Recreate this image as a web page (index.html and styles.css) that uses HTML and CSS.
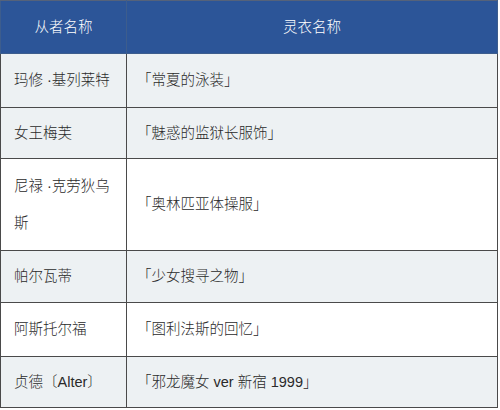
FILE: index.html
```html
<!DOCTYPE html>
<html lang="zh">
<head>
<meta charset="utf-8">
<link rel="stylesheet" href="styles.css">
</head>
<body>
<table class="costumes">
  <thead>
    <tr class="r-head">
      <th class="col-a">从者名称</th>
      <th class="col-b">灵衣名称</th>
    </tr>
  </thead>
  <tbody>
    <tr class="r1 gray"><td>玛修 ·基列莱特</td><td>「常夏的泳装」</td></tr>
    <tr class="r2 gray"><td>女王梅芙</td><td>「魅惑的监狱长服饰」</td></tr>
    <tr class="r3 white"><td>尼禄 ·克劳狄乌<br>斯</td><td>「奥林匹亚体操服」</td></tr>
    <tr class="r4 gray"><td>帕尔瓦蒂</td><td>「少女搜寻之物」</td></tr>
    <tr class="r5 white"><td>阿斯托尔福</td><td>「图利法斯的回忆」</td></tr>
    <tr class="r6 gray"><td>贞德〔Alter〕</td><td>「邪龙魔女 ver 新宿 1999」</td></tr>
  </tbody>
</table>
</body>
</html>
```

FILE: styles.css
```css
html, body {
  margin: 0;
  padding: 0;
  background: #ffffff;
}
.costumes {
  border-collapse: collapse;
  width: 498px;
  table-layout: fixed;
  font-family: "Liberation Sans", "Noto Sans CJK SC", sans-serif;
  font-size: 14.5px;
  font-weight: 300;
  color: #2a2a2a;
}
.costumes th,
.costumes td {
  padding: 0 0 0 13px;
  border: 1px solid #4a4a4a;
  vertical-align: middle;
  line-height: 37px;
}
.costumes th {
  background: #2c5598;
  color: #ffffff;
  font-weight: 300;
  text-align: center;
  padding: 0;
  border-color: #3d5d8d;
  border-top-color: #55627a;
}
.costumes .col-a { width: 125px; }
.costumes td + td { padding-left: 10px; }
.r-head { height: 53px; }
.r1 { height: 54px; }
.r2 { height: 51px; }
.r3 { height: 92px; }
.r4 { height: 52px; }
.r5 { height: 54px; }
.r6 { height: 51px; }
.gray td { background: #edf1f3; }
.white td { background: #ffffff; }
```
